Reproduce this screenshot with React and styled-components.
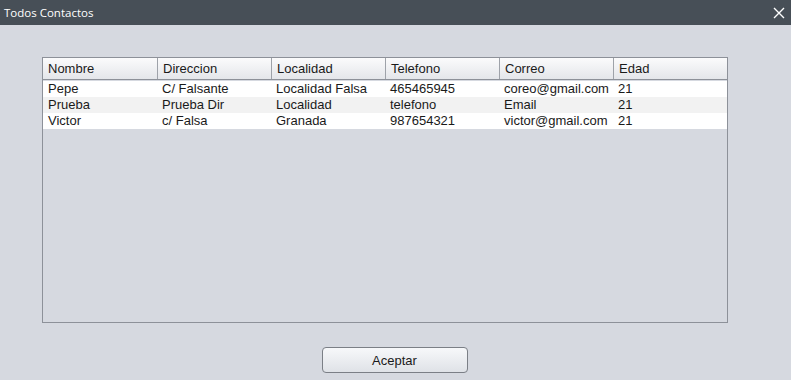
import styled, {createGlobalStyle} from "styled-components";

const GlobalStyle = createGlobalStyle`
  html, body { margin: 0; padding: 0; }
  body { width: 791px; height: 380px; overflow: hidden; background: #d6d9e0; }
`

const Window = styled.div`
  width: 791px;
  height: 380px;
  display: flex;
  flex-direction: column;
  background: #d6d9e0;
  font-family: "Liberation Sans", Arial, sans-serif;
`

const TitleBar = styled.div`
  height: 25px;
  background: #474f57;
  display: flex;
  align-items: center;
  justify-content: space-between;
  padding: 0 6px 0 4px;
  color: #ffffff;
  font-family: "Open Sans", "Noto Sans", sans-serif;
  font-size: 11.5px;
`

const CloseIcon = () => (
    <svg width="12" height="12" viewBox="0 0 12 12">
        <path d="M1 1 L11 11 M11 1 L1 11" stroke="#ffffff" strokeWidth="1.4"/>
    </svg>
)

const Body = styled.div`
  flex: 1;
  display: flex;
  flex-direction: column;
  padding-top: 32px;
`

const TableBox = styled.div`
  width: 684px;
  height: 264px;
  border: 1px solid #8d9199;
  background: #d6d9e0;
  margin-left: 42px;
`

const Row = styled.div`
  display: grid;
  grid-template-columns: 114px 114px 114px 114px 114px 114px;
  height: ${p => p.header ? "21px" : "16px"};
  background: ${p => p.header ? "linear-gradient(#fbfbfc, #e4e6ea)" : p.alt ? "#f2f2f2" : "#ffffff"};
  border-bottom: ${p => p.header ? "1px solid #8d9199" : "none"};
  margin-bottom: ${p => p.header ? "1px" : "0"};
`

const Cell = styled.div`
  font-size: 13px;
  color: #1a1a1a;
  padding-left: 5px;
  line-height: ${p => p.header ? "21px" : "16px"};
  white-space: nowrap;
  overflow: hidden;
  border-left: ${p => p.header && !p.first ? "1px solid #9ea2a9" : "none"};
`

const Footer = styled.div`
  margin-top: 24px;
  display: flex;
  justify-content: center;
  padding-right: 2px;
`

const Button = styled.button`
  width: 146px;
  height: 26px;
  border: 1px solid #7b7f86;
  border-radius: 4px;
  background: linear-gradient(#f7f8fa, #dfe2e7);
  font-family: "Liberation Sans", Arial, sans-serif;
  font-size: 13px;
  color: #1a1a1a;
  padding: 0;
`

const columns = ["Nombre", "Direccion", "Localidad", "Telefono", "Correo", "Edad"]
const rows = [
    ["Pepe", "C/ Falsante", "Localidad Falsa", "465465945", "coreo@gmail.com", "21"],
    ["Prueba", "Prueba Dir", "Localidad", "telefono", "Email", "21"],
    ["Victor", "c/ Falsa", "Granada", "987654321", "victor@gmail.com", "21"],
]

export default function App() {
    return (
        <Window>
            <GlobalStyle/>
            <TitleBar>
                <span>Todos Contactos</span>
                <CloseIcon/>
            </TitleBar>
            <Body>
                <TableBox>
                    <Row header>
                        {columns.map((c, i) => <Cell header first={i === 0} key={c}>{c}</Cell>)}
                    </Row>
                    {rows.map((r, i) => (
                        <Row alt={i % 2 === 1} key={i}>
                            {r.map((v, j) => <Cell key={j}>{v}</Cell>)}
                        </Row>
                    ))}
                </TableBox>
                <Footer>
                    <Button>Aceptar</Button>
                </Footer>
            </Body>
        </Window>
    )
}
